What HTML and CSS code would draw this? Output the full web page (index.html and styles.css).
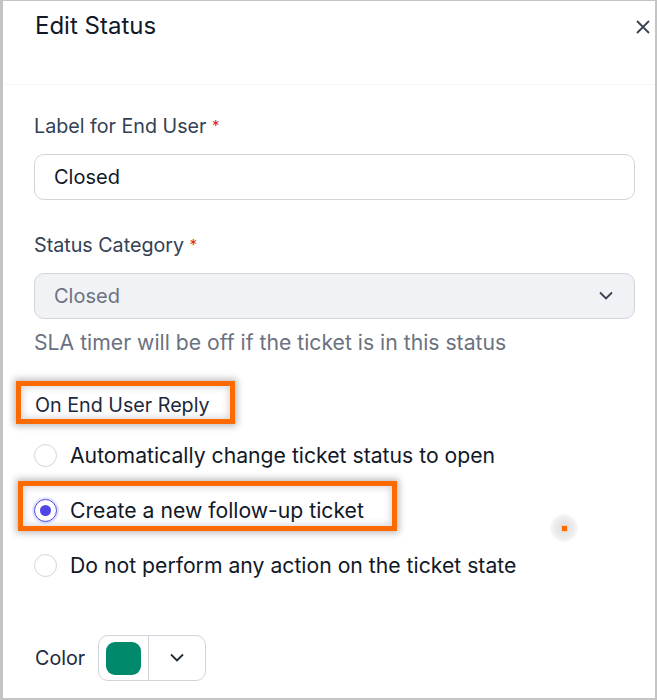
FILE: index.html
```html
<!DOCTYPE html>
<html>
<head>
<meta charset="utf-8">
<link rel="stylesheet" href="styles.css">
</head>
<body>
<div class="frame">
  <div class="header">
    <h1 class="title">Edit Status</h1>
    <svg class="close" width="16" height="16" viewBox="0 0 16 16"><path d="M2 2L14 14M14 2L2 14" stroke="#374151" stroke-width="1.8" fill="none"/></svg>
  </div>
  <div class="body">
    <div class="field">
      <label class="label">Label for End User <span class="req">*</span></label>
      <div class="input">Closed</div>
    </div>
    <div class="field">
      <label class="label">Status Category <span class="req">*</span></label>
      <div class="input select"><span>Closed</span>
        <svg width="16" height="10" viewBox="0 0 16 10"><path d="M2 1.5L8 7.5L14 1.5" stroke="#374151" stroke-width="1.8" fill="none"/></svg>
      </div>
      <div class="help">SLA timer will be off if the ticket is in this status</div>
    </div>
    <div class="reply">
      <div class="reply-title">On End User Reply</div>
      <div class="options">
        <div class="option"><span class="radio"></span>Automatically change ticket status to open</div>
        <div class="option"><span class="radio on"></span>Create a new follow-up ticket</div>
        <div class="option"><span class="radio"></span>Do not perform any action on the ticket state</div>
      </div>
      <div class="hl hl1"></div>
      <div class="hl hl2"></div>
      <div class="cursor"><span></span></div>
    </div>
    <div class="color-row">
      <span class="color-label">Color</span>
      <div class="picker">
        <div class="swatch-cell"><span class="swatch"></span></div>
        <div class="chev-cell"><svg width="16" height="10" viewBox="0 0 16 10"><path d="M2 1.5L8 7.5L14 1.5" stroke="#1f2937" stroke-width="1.8" fill="none"/></svg></div>
      </div>
    </div>
  </div>
</div>
</body>
</html>
```
FILE: styles.css
```css
* { box-sizing: border-box; }
html, body { margin: 0; padding: 0; background: #fff; }
body { font-family: Inter, "Noto Sans", sans-serif; color: #1f2937; }
.frame {
  width: 657px; height: 700px;
  border: 2px solid #c4c4c4; border-top-width: 1px; border-left-width: 3px;
  position: relative; overflow: hidden;
}
.header {
  display: flex; justify-content: space-between; align-items: flex-start;
  padding: 11px 4px 0 32px; height: 84px;
  border-bottom: 1px solid #f7f7f7;
}
.title { margin: 0; font-size: 24px; font-weight: 400; color: #111827; line-height: 28px; }
.close { margin-top: 7px; }
.body { padding: 29px 20px 0 31px; }
.field { margin-bottom: 33px; }
.label { display: block; font-size: 19.7px; color: #334155; line-height: 24px; margin-bottom: 16px; }
.req { color: #dc2626; font-size: 15px; vertical-align: 2px; }
.input {
  height: 46px; border: 1px solid #d1d5db; border-radius: 10px;
  display: flex; align-items: center; padding: 0 19px;
  font-size: 20px; color: #111827;
}
.select { background: #f1f2f6; color: #6b7280; justify-content: space-between; padding-right: 20px; }
.help { margin-top: 10px; font-size: 21.2px; color: #6b7280; line-height: 26px; }
.reply { position: relative; margin-top: 38px; }
.reply-title { font-size: 19.7px; color: #1e293b; line-height: 24px; padding-left: 1px; }
.options { display: flex; flex-direction: column; gap: 30px; margin-top: 26px; }
.option { display: flex; align-items: center; font-size: 21.2px; color: #111827; line-height: 25px; }
.radio {
  width: 23px; height: 23px; border-radius: 50%; border: 1px solid #d1d5db;
  margin-right: 13px; flex: none; background: #fff; position: relative;
}
.radio.on { border-color: #4f46e5; box-shadow: 0 0 0 2px #e0e7ff; }
.radio.on::after {
  content: ""; position: absolute; left: 5px; top: 5px; width: 11px; height: 11px;
  border-radius: 50%; background: #4f46e5;
}
.hl {
  position: absolute; border: 5px solid #ff6a00;
  box-shadow: 0 0 7px 2px rgba(0,0,0,0.28), inset 0 0 6px 2px rgba(0,0,0,0.15);
}
.hl1 { left: -18px; top: -12px; width: 219px; height: 43px; }
.hl2 { left: -16px; top: 88px; width: 379px; height: 50px; }
.cursor {
  position: absolute; left: 515px; top: 120px; width: 30px; height: 30px; border-radius: 50%;
  background: radial-gradient(circle, rgba(0,0,0,0.14) 0%, rgba(0,0,0,0.06) 55%, rgba(0,0,0,0) 70%);
  display: flex; align-items: center; justify-content: center;
}
.cursor span { width: 7px; height: 7px; background: #ff6a00; border: 1px solid #ffd0b0; }
.color-row { display: flex; align-items: center; margin-top: 57px; }
.color-label { font-size: 19.7px; color: #1e293b; width: 64px; padding-left: 1px; }
.picker {
  display: flex; height: 46px; width: 108px; border: 1px solid #d1d5db; border-radius: 10px;
}
.swatch-cell { width: 50px; border-right: 1px solid #d1d5db; display: flex; align-items: center; justify-content: center; }
.swatch { width: 35px; height: 33px; border-radius: 9px; background: #00896b; }
.chev-cell { flex: 1; display: flex; align-items: center; justify-content: center; }
```
